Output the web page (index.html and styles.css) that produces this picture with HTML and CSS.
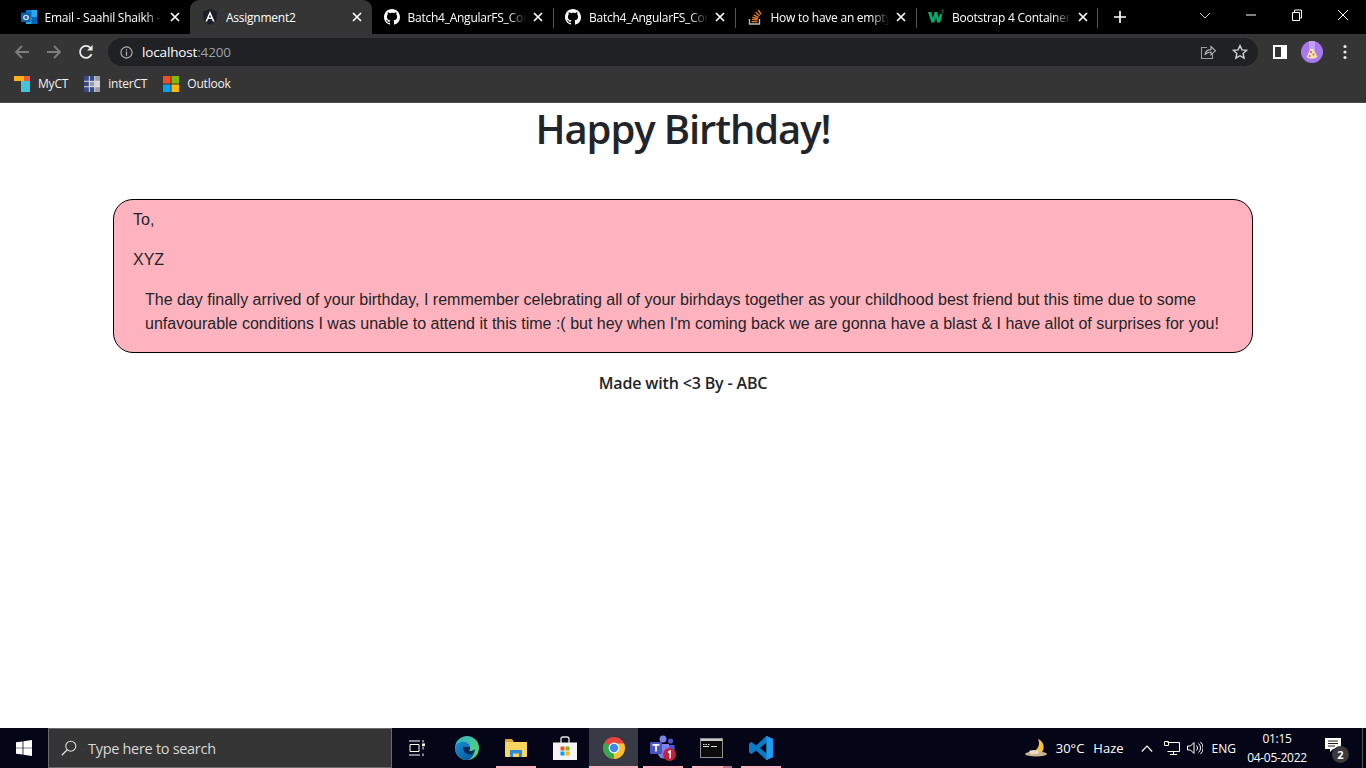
FILE: index.html
```html
<!DOCTYPE html>
<html>

<head>
    <title>Assignment2</title>
    <link rel="stylesheet" href="styles.css">
</head>

<body>
    <svg class="defs" width="0" height="0">
        <symbol id="close" viewBox="0 0 10 10">
            <path d="M1 1l8 8M9 1l-8 8" stroke="#fff" stroke-width="1.7" fill="none" />
        </symbol>
        <symbol id="github" viewBox="0 0 16 16">
            <path fill="#fff" d="M8 0C3.58 0 0 3.58 0 8c0 3.54 2.29 6.53 5.47 7.59.4.07.55-.17.55-.38 0-.19-.01-.82-.01-1.49-2.01.37-2.53-.49-2.69-.94-.09-.23-.48-.94-.82-1.13-.28-.15-.68-.52-.01-.53.63-.01 1.08.58 1.23.82.72 1.21 1.87.87 2.33.66.07-.52.28-.87.51-1.07-1.78-.2-3.64-.89-3.64-3.95 0-.87.31-1.59.82-2.15-.08-.2-.36-1.02.08-2.12 0 0 .67-.21 2.2.82.64-.18 1.32-.27 2-.27.68 0 1.36.09 2 .27 1.53-1.04 2.2-.82 2.2-.82.44 1.1.16 1.92.08 2.12.51.56.82 1.27.82 2.15 0 3.07-1.87 3.75-3.65 3.95.29.25.54.73.54 1.48 0 1.07-.01 1.93-.01 2.2 0 .21.15.46.55.38A8.013 8.013 0 0016 8c0-4.42-3.58-8-8-8z" />
        </symbol>
    </svg>

    <!-- browser tabs -->
    <div class="tabstrip">
        <div class="tab">
            <svg class="favicon" viewBox="0 0 16 16">
                <rect x="5" y="1" width="11" height="14" fill="#28a8ea" />
                <rect x="5" y="1" width="5.5" height="7" fill="#0078d4" />
                <rect x="10.5" y="8" width="5.5" height="7" fill="#0364b8" />
                <rect x="0" y="3.5" width="9.5" height="9.5" rx="1" fill="#0f62b0" />
                <text x="4.75" y="11" class="favicon-letter" fill="#fff">O</text>
            </svg>
            <span class="tab-title">Email - Saahil Shaikh -</span>
            <svg class="tab-close"><use href="#close" /></svg>
        </div>
        <div class="tab active">
            <svg class="favicon" viewBox="0 0 16 16">
                <path d="M8 0L.8 2.6l1.1 9.5L8 16l6.1-3.9 1.1-9.5z" fill="#1c1f2b" />
                <path d="M8 2L3.4 12.4h1.8l.9-2.3h3.8l.9 2.3h1.8zM6.8 8.6L8 5.7l1.2 2.9z" fill="#fff" />
            </svg>
            <span class="tab-title">Assignment2</span>
            <svg class="tab-close"><use href="#close" /></svg>
        </div>
        <div class="tab">
            <svg class="favicon"><use href="#github" /></svg>
            <span class="tab-title">Batch4_AngularFS_Cor</span>
            <svg class="tab-close"><use href="#close" /></svg>
        </div>
        <div class="tab sep">
            <svg class="favicon"><use href="#github" /></svg>
            <span class="tab-title">Batch4_AngularFS_Cor</span>
            <svg class="tab-close"><use href="#close" /></svg>
        </div>
        <div class="tab sep">
            <svg class="favicon" viewBox="0 0 16 16">
                <path d="M2.500 10v5h10v-5" fill="none" stroke="#bcbbbb" stroke-width="1.400" />
                <path d="M4.600 12.600h5.800M4.800 10.400l5.700.5M5.400 8.200l5.500 1.500M6.600 5.800l5 2.500M8.600 3.200l4.200 3.600M11.200 1l3 4.400" fill="none" stroke="#e87a25" stroke-width="1.400" />
            </svg>
            <span class="tab-title">How to have an empty</span>
            <svg class="tab-close"><use href="#close" /></svg>
        </div>
        <div class="tab sep last">
            <svg class="favicon" viewBox="0 0 16 16">
                <path d="M0 3h3.400l1.400 6 1.700-6h2.600l1.700 6 1.100-4.400 2.400 1.400-2.200 7.400H9.200L7.800 8 6.300 13.400H3.400z" fill="#04aa6d" />
                <path d="M13 1.200h2.400l-1 1.200c.9.300.9 1.800-.4 1.900-.5 0-.9-.1-1.100-.3" fill="none" stroke="#04aa6d" stroke-width=".7" />
            </svg>
            <span class="tab-title">Bootstrap 4 Container</span>
            <svg class="tab-close"><use href="#close" /></svg>
        </div>
        <svg class="new-tab" viewBox="0 0 12 12">
            <path d="M6 0v12M0 6h12" stroke="#fff" stroke-width="1.700" />
        </svg>
        <div class="window-controls">
            <svg class="win-btn" viewBox="0 0 46 12">
                <path d="M18 4l5 5 5-5" fill="none" stroke="#ccc" />
            </svg>
            <svg class="win-btn" viewBox="0 0 46 12">
                <path d="M18 6h10" stroke="#fff" />
            </svg>
            <svg class="win-btn" viewBox="0 0 46 12">
                <path d="M18.500 3.500h7v8h-7zM20.500 3.500v-2.500h7v8h-2" fill="none" stroke="#fff" />
            </svg>
            <svg class="win-btn" viewBox="0 0 46 12">
                <path d="M18 1l10 10M28 1l-10 10" fill="none" stroke="#fff" />
            </svg>
        </div>
    </div>

    <!-- address bar -->
    <div class="toolbar">
        <svg class="nav-icon" viewBox="0 0 16 16">
            <path d="M15 8H2M8 2L2 8l6 6" fill="none" stroke="#7c7e80" stroke-width="1.800" />
        </svg>
        <svg class="nav-icon" viewBox="0 0 16 16">
            <path d="M1 8h13M8 2l6 6-6 6" fill="none" stroke="#7c7e80" stroke-width="1.800" />
        </svg>
        <svg class="nav-icon" viewBox="0 0 16 16">
            <path d="M13.600 10.200A6 6 0 1 1 12.600 4" fill="none" stroke="#e8eaed" stroke-width="1.800" />
            <path d="M14.600 1v5.600H9z" fill="#e8eaed" />
        </svg>
        <div class="omnibox">
            <svg class="info-icon" viewBox="0 0 14 14">
                <circle cx="7" cy="7" r="6" fill="none" stroke="#b5b7ba" stroke-width="1.200" />
                <path d="M7 6v4.400M7 3.400v1.500" stroke="#b5b7ba" stroke-width="1.300" />
            </svg>
            <span class="url">localhost<span class="url-port">:4200</span></span>
            <svg class="omni-icon share" viewBox="0 0 16 16">
                <path d="M7 3.500H1.500v11h11V10" fill="none" stroke="#9a9c9f" stroke-width="1.100" />
                <path d="M5 11c.3-3.600 2.800-5.400 6-5.400V2.500L15.500 6.800 11 10.800V8c-2.500 0-4.600.8-6 3z" fill="none" stroke="#b5b7ba" stroke-width="1.100" />
            </svg>
            <svg class="omni-icon" viewBox="0 0 16 16">
                <path d="M8 1.600l1.900 4.300 4.700.5-3.500 3.100 1 4.600L8 11.700l-4.100 2.400 1-4.600L1.400 6.400l4.700-.5z" fill="none" stroke="#d0d2d5" stroke-width="1.400" />
            </svg>
        </div>
        <svg class="panel-icon" viewBox="0 0 14 14">
            <path d="M1 1h12v12H1z" fill="none" stroke="#fff" stroke-width="2" />
            <rect x="8" y="1" width="5" height="12" fill="#fff" />
        </svg>
        <svg class="avatar" viewBox="0 0 22 22">
            <circle cx="11" cy="11" r="11" fill="#a879ee" />
            <path d="M9 0v9M11 0v9M13 0v9" stroke="#e3d3fa" stroke-width=".9" />
            <path d="M5.500 16l4-8h3l4 8a6 3 0 0 1-11 0z" fill="#f6e3b5" />
            <circle cx="10" cy="11" r="1" fill="#d9532c" />
            <circle cx="12.500" cy="13.500" r="1" fill="#d9532c" />
            <circle cx="8.500" cy="15" r="1" fill="#d9532c" />
        </svg>
        <svg class="menu-icon" viewBox="0 0 4 16">
            <circle cx="2" cy="2.500" r="1.600" fill="#e8eaed" />
            <circle cx="2" cy="8" r="1.600" fill="#e8eaed" />
            <circle cx="2" cy="13.500" r="1.600" fill="#e8eaed" />
        </svg>
    </div>

    <!-- bookmarks -->
    <div class="bookmarks">
        <div class="bookmark">
            <svg class="favicon" viewBox="0 0 16 16">
                <rect x="0" y="0" width="10" height="5" fill="#fbb217" />
                <rect x="10" y="0" width="6" height="5" fill="#ef5a45" />
                <rect x="7" y="5" width="9" height="11" fill="#42c5dc" />
            </svg>
            <span>MyCT</span>
        </div>
        <div class="bookmark">
            <svg class="favicon" viewBox="0 0 16 16">
                <rect width="16" height="16" fill="#d5d6da" />
                <path d="M0 0h5v5H0zM5.500 0h5v5h-5zM0 5.500h5v5H0zM0 11h5v5H0zM5.500 11h5v5h-5z" fill="#3a4a86" />
                <path d="M5.500 5.500h5v5h-5zM11 0h5v5h-5zM11 11h5v5h-5z" fill="#9a9da6" />
                <path d="M5.250 0v16M10.750 0v16M0 5.250h16M0 10.750h16" stroke="#e6e7ea" stroke-width=".7" />
            </svg>
            <span>interCT</span>
        </div>
        <div class="bookmark">
            <svg class="favicon" viewBox="0 0 16 16">
                <rect x="0" y="0" width="7.500" height="7.500" fill="#f25022" />
                <rect x="8.500" y="0" width="7.500" height="7.500" fill="#7fba00" />
                <rect x="0" y="8.500" width="7.500" height="7.500" fill="#00a4ef" />
                <rect x="8.500" y="8.500" width="7.500" height="7.500" fill="#ffb900" />
            </svg>
            <span>Outlook</span>
        </div>
    </div>

    <!-- the page itself -->
    <div class="page">
        <h1 class="title">Happy Birthday!</h1>
        <div class="card">
            <p class="line">To,</p>
            <p class="line">XYZ</p>
            <p class="line message">The day finally arrived of your birthday, I remmember celebrating all of your birhdays together as your childhood best friend but this time due to some unfavourable conditions I was unable to attend it this time :( but hey when I'm coming back we are gonna have a blast &amp; I have allot of surprises for you!</p>
        </div>
        <p class="made-by">Made with &lt;3 By - ABC</p>
    </div>

    <!-- windows taskbar -->
    <div class="taskbar">
        <div class="start">
            <svg class="start-icon" viewBox="0 0 18 18">
                <path d="M0 2.600l7.400-1v7H0zM8.300 1.400L18 0v8.600H8.300zM0 9.400h7.400v7l-7.400-1zM8.300 9.400H18V18l-9.700-1.400z" fill="#fff" />
            </svg>
        </div>
        <div class="search">
            <svg class="search-icon" viewBox="0 0 16 16">
                <circle cx="9.800" cy="6.200" r="5" fill="none" stroke="#ddd" stroke-width="1.100" />
                <path d="M6.200 9.800L.8 15.200" stroke="#ddd" stroke-width="1.300" />
            </svg>
            <span>Type here to search</span>
        </div>
        <div class="task-slot first">
            <svg class="view-icon" viewBox="0 0 16 16">
                <path d="M0 1h11M0 15h11M1 4.500h9v7H1zM14 0v2.500M14 6.500v3M14 13.500V16" fill="none" stroke="#fff" />
                <rect x="13" y="3.500" width="3" height="2.500" fill="#fff" />
            </svg>
        </div>
        <div class="task-slot">
            <svg class="task-icon" viewBox="0 0 24 24">
                <defs>
                    <linearGradient id="edge-a" x1="0" y1="0" x2="1" y2="1">
                        <stop offset="0" stop-color="#2fb3c9" />
                        <stop offset="1" stop-color="#5ed86a" />
                    </linearGradient>
                    <linearGradient id="edge-b" x1="0" y1="0" x2="1" y2="1">
                        <stop offset="0" stop-color="#1590d8" />
                        <stop offset="1" stop-color="#0a4f96" />
                    </linearGradient>
                </defs>
                <circle cx="12" cy="12" r="12" fill="url(#edge-a)" />
                <path d="M0 12c1-5 6-7 10-6 3 .8 5 3 5 5H8c-1 4 2 7 6 7 2 0 4-.500 5.500-1.500C17.500 22 14.500 24 11.500 24 5 24 0 18.500 0 12z" fill="url(#edge-b)" />
                <path d="M8 11h7c.5 2.500-.5 3.500-1 3.800 2 .5 4.500 0 6-1.800 0 2-1 3.500-2 4.500-5 2.500-11-.5-10-6.500z" fill="#0a2a5c" />
            </svg>
        </div>
        <div class="task-slot open">
            <svg class="folder-icon" viewBox="0 0 22 18">
                <path d="M0 1a1 1 0 0 1 1-1h6l2 3h13v3H0z" fill="#d9a53c" />
                <rect x="0" y="3" width="22" height="15" rx="1" fill="#fbd55e" />
                <path d="M5 18v-7h12v7h-3v-3.500H8V18z" fill="#2b8ad3" />
            </svg>
        </div>
        <div class="task-slot">
            <svg class="task-icon" viewBox="0 0 24 24">
                <path d="M8 7V3a2 2 0 0 1 2-2h4a2 2 0 0 1 2 2v4" fill="none" stroke="#e8e8e8" stroke-width="1.300" />
                <path d="M0 6.500h24V24H0z" fill="#f4f4f4" />
                <rect x="7.500" y="10.500" width="4" height="4" fill="#f25022" />
                <rect x="12.500" y="10.500" width="4" height="4" fill="#7fba00" />
                <rect x="7.500" y="15.500" width="4" height="4" fill="#00a4ef" />
                <rect x="12.500" y="15.500" width="4" height="4" fill="#ffb900" />
            </svg>
        </div>
        <div class="task-slot open active">
            <svg class="task-icon" viewBox="0 0 24 24">
                <circle cx="12" cy="12" r="11" fill="#e8453c" />
                <path d="M12 12L2.500 6.500A11 11 0 0 0 12 23z" fill="#34a853" />
                <path d="M12 12v11A11 11 0 0 0 22 7.500H12z" fill="#fbc02d" />
                <circle cx="12" cy="12" r="5.400" fill="#fff" />
                <circle cx="12" cy="12" r="4.200" fill="#4285f4" />
            </svg>
        </div>
        <div class="task-slot open">
            <svg class="teams-icon" viewBox="0 0 26 26">
                <circle cx="13" cy="4" r="3.500" fill="#7b83eb" />
                <circle cx="20.500" cy="6" r="2.600" fill="#5059c9" />
                <path d="M8 9h11v9a5.500 5.500 0 0 1-11 0z" fill="#7b83eb" />
                <path d="M19 10h5.500v6a3 3 0 0 1-5.500 1.500z" fill="#5059c9" />
                <rect x="0" y="7" width="12" height="12" rx="1" fill="#4b53bc" />
                <path d="M2.500 9.800h7M6 9.800v6.800" stroke="#fff" stroke-width="1.700" />
                <circle cx="19.500" cy="19.500" r="6.500" fill="#c4213f" />
                <path d="M18 17.500l2-1.300v7" fill="none" stroke="#fff" stroke-width="1.700" />
            </svg>
        </div>
        <div class="task-slot open stacked">
            <svg class="cmd-icon" viewBox="0 0 23 20">
                <rect x=".5" y=".5" width="22" height="19" fill="#0c0c0c" stroke="#8e8e8e" />
                <rect x="1" y="1" width="21" height="2" fill="#c9c9c9" />
                <path d="M3 6.500h1.500M5.500 6.500h1.500M8 6.500h1.500M3 8.500h6M11 8.500h6" stroke="#dcdcdc" />
            </svg>
        </div>
        <div class="task-slot open">
            <svg class="task-icon" viewBox="0 0 24 24">
                <path d="M17.500 0L24 3v18l-6.500 3L7 14.500 2.500 18 0 16.500V7.500L2.500 6 7 9.500zM17.500 6.500L11 12l6.500 5.500z" fill="#0a7cc5" />
                <path d="M17.500 0L24 3v18l-6.500 3z" fill="#1f9cf0" />
            </svg>
        </div>
        <div class="tray">
            <svg class="weather-icon" viewBox="0 0 22 18">
                <path d="M13 0a8.500 8.500 0 0 1 4 13H4A9 9 0 0 0 13 0z" fill="#f5c33b" />
                <ellipse cx="11" cy="15" rx="11" ry="2.500" fill="#c9b48f" />
                <ellipse cx="9" cy="13" rx="5" ry="2" fill="#e8dcc2" />
            </svg>
            <span class="temp">30°C</span>
            <span class="haze">Haze</span>
            <svg class="chevron" viewBox="0 0 12 7">
                <path d="M.8 6.500L6 1l5.200 5.500" fill="none" stroke="#fff" stroke-width="1.100" />
            </svg>
            <svg class="tray-icon network" viewBox="0 0 16 16">
                <path d="M3.500 2.500h12v9h-12M9.500 11.500v3M6 14.500h7M.5 1.500h4v4h-4z" fill="none" stroke="#fff" />
            </svg>
            <svg class="tray-icon volume" viewBox="0 0 16 16">
                <path d="M.5 6h3L7 2.500v11L3.500 10h-3zM9.500 5.500a3.500 3.500 0 0 1 0 5M11.500 3.500a6 6 0 0 1 0 9M13.500 2a8 8 0 0 1 0 12" fill="none" stroke="#fff" />
            </svg>
            <span class="lang">ENG</span>
            <div class="clock">
                <span>01:15</span>
                <span>04-05-2022</span>
            </div>
            <div class="notify">
                <svg class="notify-icon" viewBox="0 0 16 15">
                    <path d="M0 0h16v11H8l-3 3v-3H0z" fill="#fff" />
                    <path d="M3 3h10M3 5.500h10M3 8h7" stroke="#222" />
                </svg>
                <span class="notify-badge">2</span>
            </div>
            <div class="show-desktop"></div>
        </div>
    </div>
</body>

</html>
```

FILE: styles.css
```css
* {
    box-sizing: border-box;
}

html,
body {
    height: 100%;
}

body {
    margin: 0;
    display: flex;
    flex-direction: column;
    height: 768px;
    overflow: hidden;
    background-color: #fff;
    font-family: "Open Sans", "Noto Sans", sans-serif;
}

.defs {
    position: absolute;
}

svg {
    display: block;
    flex-shrink: 0;
}

/* tabs */
.tabstrip {
    display: flex;
    align-items: stretch;
    height: 34px;
    padding-left: 8.5px;
    background-color: #000;
    color: #fff;
}

.tab {
    position: relative;
    display: flex;
    align-items: center;
    width: 181.5px;
    padding: 0 10px 0 12px;
}

.tab.sep::before,
.tab.last::after {
    content: "";
    position: absolute;
    top: 8px;
    height: 20px;
    width: 1px;
    background-color: #555;
}

.tab.sep::before {
    left: 0;
}

.tab.last::after {
    right: 0;
}

.tab.active {
    background-color: #353535;
    border-radius: 9px 9px 0 0;
}

.favicon {
    width: 16px;
    height: 16px;
}

.favicon-letter {
    font-family: "Liberation Sans", sans-serif;
    font-size: 8px;
    font-weight: bold;
    text-anchor: middle;
}

.tab-title {
    flex: 1;
    min-width: 0;
    margin-left: 8px;
    overflow: hidden;
    white-space: nowrap;
    font-size: 12px;
    letter-spacing: -0.25px;
    -webkit-mask-image: linear-gradient(to right, #000 82%, transparent 97%);
}

.tab.active .tab-title {
    -webkit-mask-image: none;
}

.tab-close {
    width: 10px;
    height: 10px;
    margin-left: 3px;
}

.new-tab {
    width: 12px;
    height: 12px;
    margin: 11px 0 0 16px;
}

.window-controls {
    display: flex;
    margin-left: auto;
}

.win-btn {
    width: 46px;
    height: 12px;
    margin-top: 9px;
}

/* address bar */
.toolbar {
    display: flex;
    align-items: center;
    height: 36px;
    padding-left: 14px;
    background-color: #353535;
}

.nav-icon {
    width: 16px;
    height: 16px;
    margin-right: 16px;
}

.omnibox {
    display: flex;
    align-items: center;
    width: 1150px;
    height: 28px;
    margin-left: -2px;
    padding: 0 10px 0 12px;
    border-radius: 14px;
    background-color: #202124;
}

.info-icon {
    width: 13px;
    height: 13px;
}

.url {
    margin-left: 9px;
    font-size: 13.5px;
    letter-spacing: -0.15px;
    color: #fff;
}

.url-port {
    color: #9aa0a6;
}

.omni-icon {
    width: 16px;
    height: 16px;
    margin-left: 16px;
}

.omni-icon.share {
    margin-left: auto;
}

.panel-icon {
    width: 14px;
    height: 14px;
    margin-left: 15px;
}

.avatar {
    width: 22px;
    height: 22px;
    margin-left: 14px;
}

.menu-icon {
    width: 4px;
    height: 16px;
    margin-left: 20px;
}

/* bookmarks */
.bookmarks {
    display: flex;
    align-items: center;
    gap: 16px;
    height: 33px;
    padding: 0 0 5px 14px;
    background-color: #353535;
    border-bottom: 1px solid #4a4a4a;
}

.bookmark {
    display: flex;
    align-items: center;
    gap: 8px;
    font-size: 12px;
    letter-spacing: -0.2px;
    color: #f1f3f4;
}

/* page */
.page {
    flex: 1;
    color: #212529;
}

.title {
    margin: 0;
    padding-top: 2px;
    font-size: 40px;
    font-weight: 600;
    line-height: 48px;
    letter-spacing: -1.1px;
    text-align: center;
}

.card {
    width: 1140px;
    margin: 46px auto 0;
    padding: 8px 19px 0;
    border: 1px solid #000;
    border-radius: 20px;
    background-color: #ffb3be;
    font-family: "Liberation Sans", Arial, sans-serif;
    font-size: 16px;
    line-height: 24px;
}

.line {
    margin: 0 0 16px;
}

.message {
    margin-left: 12px;
}

.made-by {
    margin: 18px 0 0;
    font-size: 16px;
    font-weight: 600;
    line-height: 24px;
    letter-spacing: -0.15px;
    text-align: center;
}

/* taskbar */
.taskbar {
    display: flex;
    align-items: center;
    height: 40px;
    background-color: #040617;
    color: #fff;
}

.start {
    display: flex;
    align-items: center;
    justify-content: center;
    width: 48px;
    height: 40px;
}

.start-icon {
    width: 16px;
    height: 16px;
}

.search {
    display: flex;
    align-items: center;
    width: 344px;
    height: 40px;
    padding-left: 12px;
    border: 1px solid #6a6a6a;
    background-color: #353535;
    font-size: 14.5px;
    letter-spacing: -0.3px;
    color: #d8d8d8;
}

.search-icon {
    width: 16px;
    height: 16px;
    margin-right: 11px;
}

.task-slot {
    position: relative;
    display: flex;
    align-items: center;
    justify-content: center;
    width: 49px;
    height: 40px;
}

.task-slot.first {
    width: 50px;
}

.task-slot.active {
    background-color: #383a45;
}

.task-slot.open::after {
    content: "";
    position: absolute;
    bottom: 0;
    left: 5px;
    right: 4px;
    height: 2px;
    background-color: #ffb3be;
}

.task-slot.active::after {
    left: 0;
    right: 0;
}

.task-slot.stacked::after {
    background: linear-gradient(to right, #ffb3be 78%, #b97984 78%);
}

.task-icon {
    width: 24px;
    height: 24px;
}

.view-icon {
    width: 16px;
    height: 16px;
}

.folder-icon {
    width: 22px;
    height: 18px;
}

.teams-icon {
    width: 26px;
    height: 26px;
}

.cmd-icon {
    width: 23px;
    height: 20px;
}

.tray {
    display: flex;
    align-items: center;
    flex: 1;
    justify-content: flex-end;
    font-size: 13px;
}

.weather-icon {
    width: 22px;
    height: 18px;
}

.temp {
    margin-left: 9px;
}

.haze {
    margin-left: 9px;
}

.chevron {
    width: 12px;
    height: 7px;
    margin-left: 17px;
}

.tray-icon {
    width: 16px;
    height: 16px;
}

.tray-icon.network {
    margin-left: 11px;
}

.tray-icon.volume {
    margin-left: 7px;
}

.lang {
    margin-left: 9px;
    font-size: 12px;
}

.clock {
    display: flex;
    flex-direction: column;
    align-items: center;
    gap: 2px;
    width: 68px;
    margin-left: 7px;
    font-size: 12px;
    line-height: 17px;
    letter-spacing: -0.3px;
}

.notify {
    position: relative;
    width: 20px;
    height: 20px;
    margin-left: 14px;
}

.notify-icon {
    width: 16px;
    height: 15px;
}

.notify-badge {
    position: absolute;
    right: -4px;
    bottom: -5px;
    width: 17px;
    height: 17px;
    border-radius: 50%;
    background-color: #3a3a3a;
    font-size: 11px;
    font-weight: bold;
    line-height: 17px;
    text-align: center;
}

.show-desktop {
    width: 1px;
    height: 40px;
    margin: 0 3px 0 17px;
    background-color: #555;
}
```
